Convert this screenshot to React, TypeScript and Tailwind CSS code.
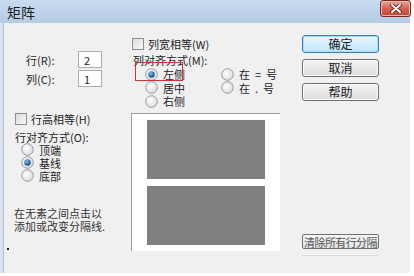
import React from "react";

const F = { fontFamily: '"Noto Sans CJK SC", "Liberation Sans", sans-serif' };

function Radio({ checked }: { checked?: boolean }) {
  return (
    <svg width="13" height="13" viewBox="0 0 13 13" className="shrink-0">
      <defs>
        <radialGradient id={checked ? "rgc" : "rgu"} cx="0.4" cy="0.4" r="0.7">
          <stop offset="0" stopColor="#ffffff" />
          <stop offset="1" stopColor="#d4d6d8" />
        </radialGradient>
        <radialGradient id="dot" cx="0.4" cy="0.35" r="0.7">
          <stop offset="0" stopColor="#8fc4ee" />
          <stop offset="0.6" stopColor="#2c6fb0" />
          <stop offset="1" stopColor="#153e6e" />
        </radialGradient>
      </defs>
      <circle cx="6.5" cy="6.5" r="5.8" fill={`url(#${checked ? "rgc" : "rgu"})`} stroke="#9a9c9e" strokeWidth="1" />
      {checked && <circle cx="6.5" cy="6.5" r="3.2" fill="url(#dot)" />}
    </svg>
  );
}

function Check() {
  return (
    <span className="w-[12px] h-[12px] shrink-0 border border-[#8f8f8f] bg-gradient-to-br from-[#dcdcdc] to-[#f8f8f8] box-border" />
  );
}

function Btn({ children, def }: { children: React.ReactNode; def?: boolean }) {
  return (
    <div
      className={
        "w-[77px] h-[18px] rounded-[3px] flex items-center justify-center text-[12px] text-[#1a1a1a] " +
        (def
          ? "border border-[#3c7fb1] bg-gradient-to-b from-[#eaf6fd] to-[#bee6fd] shadow-[inset_0_0_0_1px_#a6dcfa]"
          : "border border-[#707070] bg-gradient-to-b from-[#f4f4f4] to-[#dcdcdc] shadow-[inset_0_0_0_1px_#fcfcfc]")
      }
    >
      {children}
    </div>
  );
}

export default function App() {
  return (
    <div className="w-[414px] h-[276px] bg-white" style={F}>
      <div className="w-[410px] h-[273px] flex flex-col bg-[#f0f0f0]">
        {/* title bar */}
        <div className="h-[23px] shrink-0 flex items-center justify-between bg-gradient-to-b from-[#c8dbef] to-[#b5cce5] pl-[7px]">
          <span className="text-[14px] text-[#1b1b1b] leading-[16px]">矩阵</span>
          <div className="w-[31px] h-[17px] mt-[-6px] mr-[-1px] rounded-[3px] border border-[#7b2a22] bg-gradient-to-b from-[#e9a99b] via-[#d2604f] to-[#c3463a] flex items-center justify-center shadow-[inset_0_0_0_1px_#eeb9ad]">
            <svg width="12" height="9" viewBox="0 0 12 9">
              <path d="M2 1 L10 8 M10 1 L2 8" stroke="#3d1712" strokeWidth="3.4" strokeLinecap="round" />
              <path d="M2 1 L10 8 M10 1 L2 8" stroke="#ffffff" strokeWidth="2" strokeLinecap="round" />
            </svg>
          </div>
        </div>

        {/* body */}
        <div className="flex-1 flex border-l-[3px] border-l-[#dbe4ee] text-[11px] text-[#1e1e1e] leading-[12px]">
          {/* left column */}
          <div className="w-[128px] shrink-0 flex flex-col border-l border-l-[#b9c2cc]">
            <div className="mt-[28px] flex flex-col gap-[2px]">
              <div className="flex items-center h-[17px]">
                <span className="ml-[22px] w-[52px]">行(R):</span>
                <div className="w-[24px] h-[17px] bg-white border border-[#abadb3] flex items-center pl-[5px] text-[11px]">2</div>
              </div>
              <div className="flex items-center h-[17px]">
                <span className="ml-[22px] w-[52px]">列(C):</span>
                <div className="w-[24px] h-[17px] bg-white border border-[#abadb3] flex items-center pl-[5px] text-[11px]">1</div>
              </div>
            </div>
            <div className="mt-[25px] ml-[11px] flex items-center gap-[4px] h-[13px]">
              <Check />
              <span>行高相等(H)</span>
            </div>
            <div className="mt-[5px] ml-[11px] h-[13px] flex items-center">行对齐方式(O):</div>
            <div className="ml-[17px] flex flex-col">
              <div className="h-[13px] flex items-center gap-[5px]"><Radio /><span>顶端</span></div>
              <div className="h-[13px] flex items-center gap-[5px]"><Radio checked /><span>基线</span></div>
              <div className="h-[13px] flex items-center gap-[5px]"><Radio /><span>底部</span></div>
            </div>
            <div className="mt-[24px] ml-[10px] flex flex-col text-[#333]">
              <div className="h-[13px] flex items-center">在无素之间点击以</div>
              <div className="h-[13px] flex items-center">添加或改变分隔线.</div>
            </div>
            <div className="mt-[16px] ml-[3px] w-[2px] h-[2px] bg-[#222]" />
          </div>

          {/* middle column */}
          <div className="w-[150px] shrink-0 flex flex-col relative">
            <div className="mt-[14px] ml-[1px] h-[13px] flex items-center gap-[4px]">
              <Check />
              <span>列宽相等(W)</span>
            </div>
            <div className="mt-[3px] ml-[2px] h-[13px] flex items-center">列对齐方式(M):</div>
            <div className="mt-[1px] flex">
              <div className="ml-[14px] flex flex-col w-[76px]">
                <div className="h-[14px] flex items-center gap-[5px]"><Radio checked /><span>左侧</span></div>
                <div className="h-[13px] flex items-center gap-[5px]"><Radio /><span>居中</span></div>
                <div className="h-[14px] flex items-center gap-[5px]"><Radio /><span>右侧</span></div>
              </div>
              <div className="flex flex-col">
                <div className="h-[14px] flex items-center gap-[5px]"><Radio /><span className="whitespace-pre">在  =  号</span></div>
                <div className="h-[13px] flex items-center gap-[5px]"><Radio /><span className="whitespace-pre">在  .  号</span></div>
              </div>
            </div>
            <div className="absolute left-[4px] top-[39px] w-[48px] h-[19px] border border-[#c0393b]" />
            <div className="mt-[5px] w-[149px] h-[138px] bg-white border-t border-l border-t-[#a0a0a0] border-l-[#a0a0a0] flex flex-col items-center pt-[6px] gap-[7px]">
              <div className="w-[118px] h-[59px] bg-[#808080]" />
              <div className="w-[118px] h-[59px] bg-[#808080]" />
            </div>
          </div>

          {/* right column */}
          <div className="flex-1 flex flex-col pl-[21px]">
            <div className="mt-[12px] flex flex-col gap-[6px]">
              <Btn def>确定</Btn>
              <Btn>取消</Btn>
              <Btn>帮助</Btn>
            </div>
            <div className="mt-[133px] w-[77px] h-[15px] rounded-[2px] border border-[#707070] bg-gradient-to-b from-[#f6f6f6] to-[#e2e2e2] flex items-center justify-center text-[11px] tracking-[-0.6px] text-[#555] whitespace-nowrap">
              清除所有行分隔
            </div>
            <div className="mt-[6px] w-[77px] h-[1px] bg-[#dcdcdc]" />
          </div>
        </div>
      </div>
    </div>
  );
}
